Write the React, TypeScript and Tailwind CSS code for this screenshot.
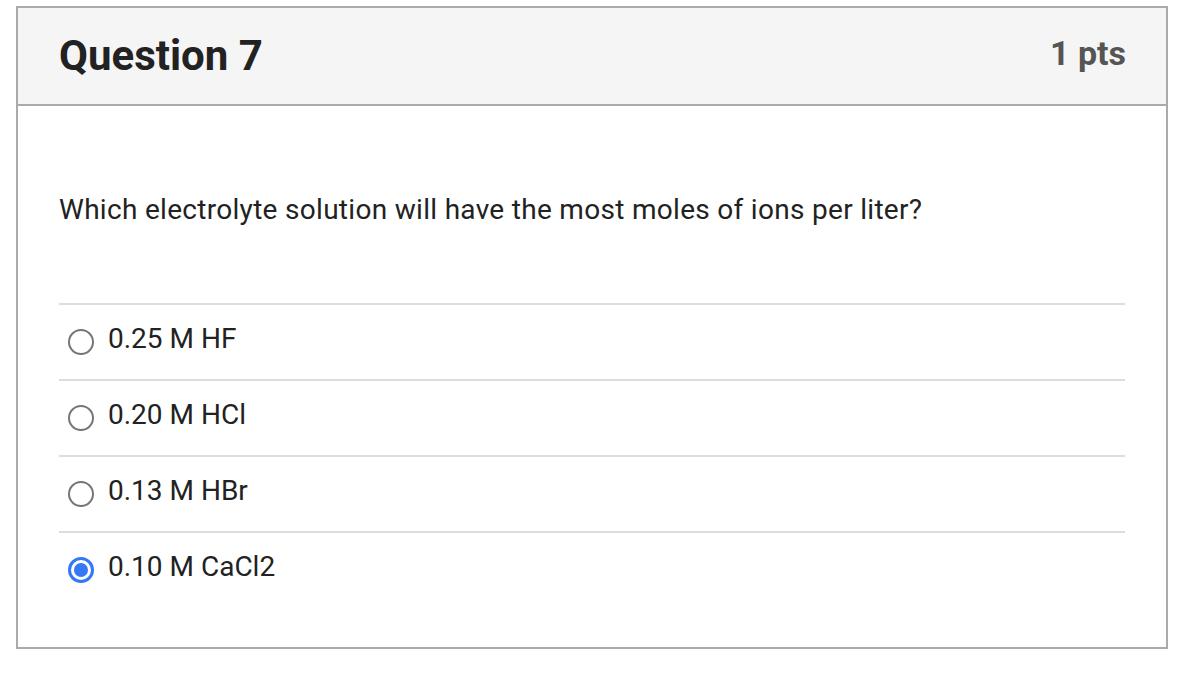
import React, { useState } from 'react';

const OPTIONS = ['0.25 M HF', '0.20 M HCl', '0.13 M HBr', '0.10 M CaCl2'];

export default function App() {
  const [selected, setSelected] = useState(3);

  return (
    <div className="min-h-screen bg-white pt-[6px] pl-[16px]" style={{ fontFamily: 'Roboto, "Liberation Sans", sans-serif' }}>
      <div className="w-[1152px] border-2 border-[#aaaaaa] text-[#222222]">
        {/* Header */}
        <div className="h-[98px] flex items-center justify-between bg-[#f5f5f5] border-b-2 border-[#aaaaaa] pl-[41px] pr-[40px]">
          <h2 className="text-[42px] font-bold leading-none mt-[0px]">Question 7</h2>
          <span className="text-[34px] font-bold text-[#555555] leading-none mt-[-6px]">1 pts</span>
        </div>

        {/* Body */}
        <div className="px-[41px] pt-[86px] pb-[40px]">
          <p className="text-[28px] tracking-[0.3px] leading-[36px] mb-[75px]">
            Which electrolyte solution will have the most moles of ions per liter?
          </p>

          <div>
            {OPTIONS.map((opt, i) => (
              <label
                key={opt}
                className="flex items-center h-[76px] border-t-2 border-[#dddddd] cursor-pointer"
                onClick={() => setSelected(i)}
              >
                <span className="ml-[9px] mr-[14px] w-[26px] h-[26px] flex items-center justify-center shrink-0">
                  {selected === i ? (
                    <span className="w-[26px] h-[26px] rounded-full border-[3px] border-[#3478f6] flex items-center justify-center">
                      <span className="w-[14px] h-[14px] rounded-full bg-[#3478f6]" />
                    </span>
                  ) : (
                    <span className="w-[26px] h-[26px] rounded-full border-2 border-[#767676]" />
                  )}
                </span>
                <span className="text-[28px] leading-none pb-[6px]">{opt}</span>
              </label>
            ))}
          </div>
        </div>
      </div>
    </div>
  );
}
